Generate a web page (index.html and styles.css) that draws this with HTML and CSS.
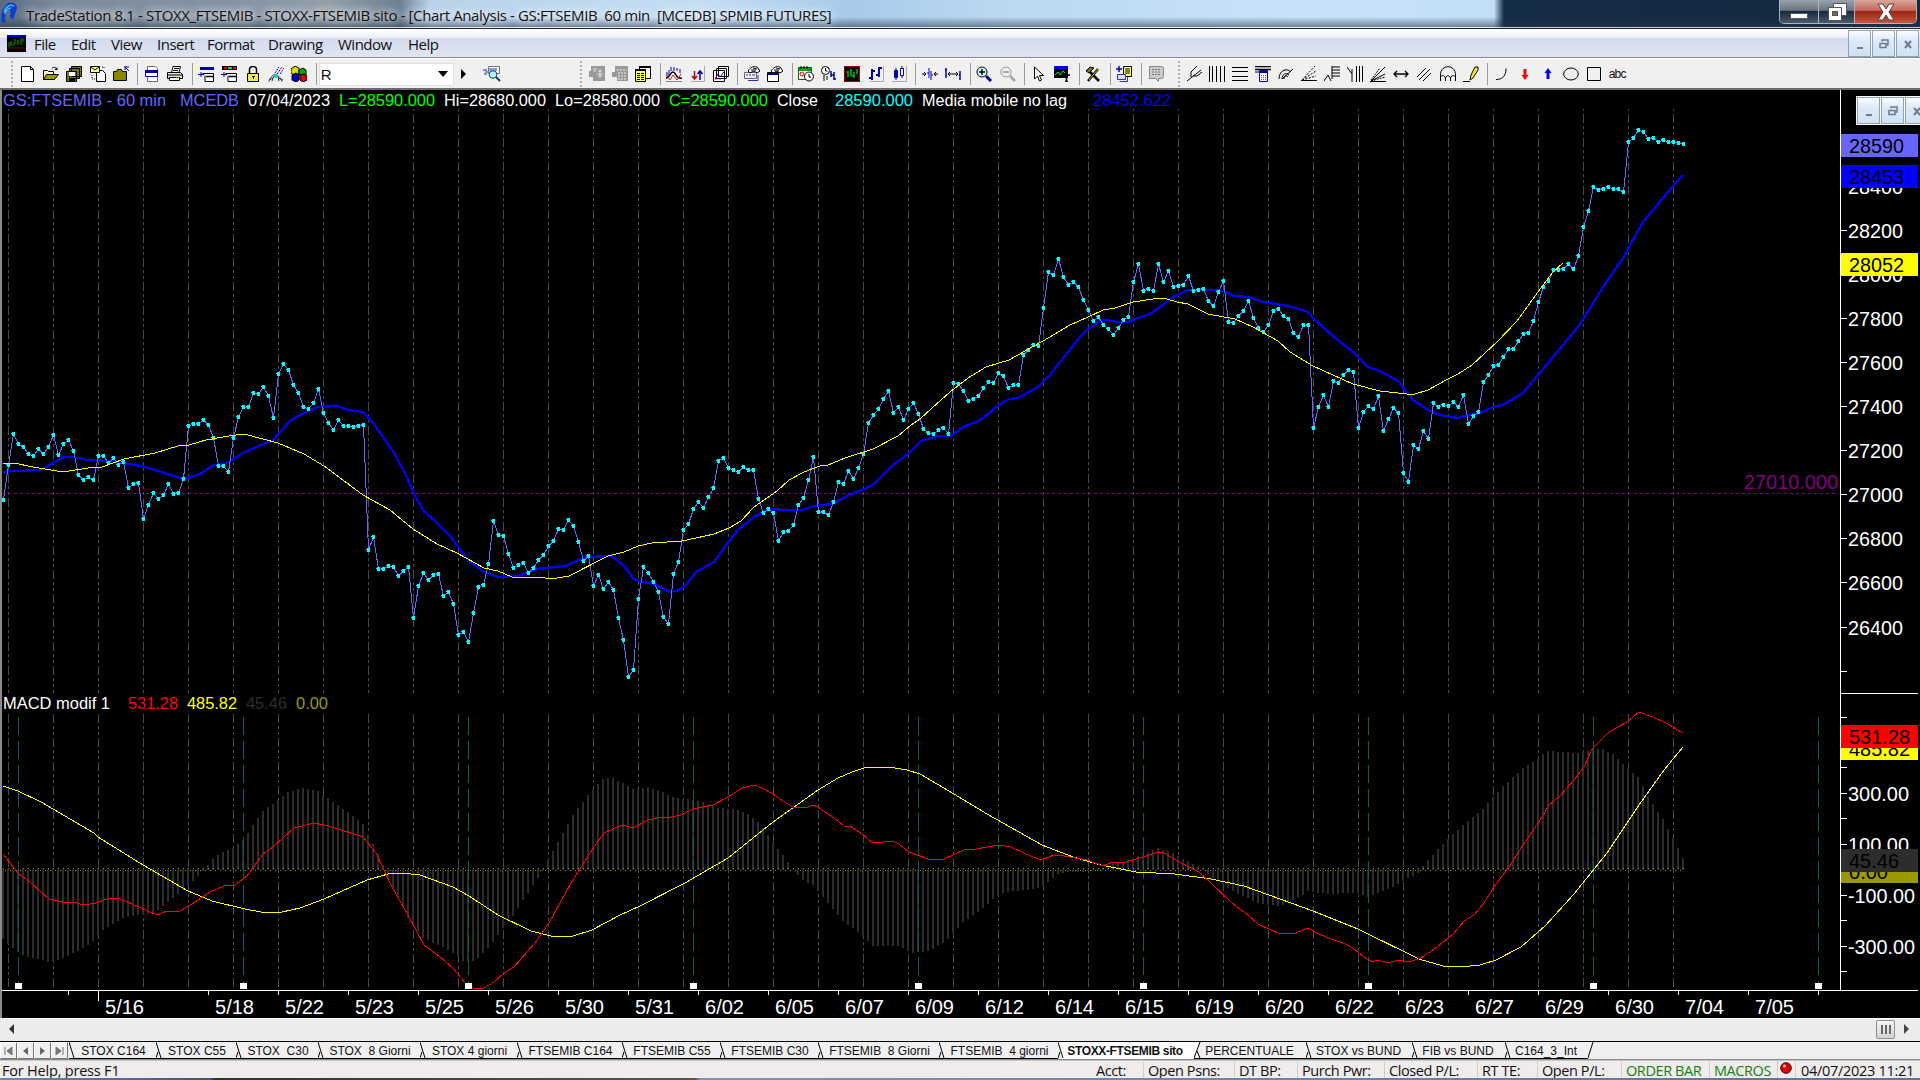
FILE: index.html
```html
<!DOCTYPE html>
<html lang="it">
<head>
    <meta charset="utf-8">
    <title>TradeStation 8.1</title>
    <link rel="stylesheet" href="styles.css">
</head>
<body>
<div class="window">
    <!-- Title bar -->
    <div class="titlebar">
        <svg class="logo" width="18" height="24" viewBox="0 0 18 24"><path d="M2 21C0 14 2 6 7 2c4-3 9-1 10 3 0 4-3 7-3 12l-4-1c0-5 1-8-1-9-3 1-4 8-4 14z" fill="#0a3fd0"/><path d="M4 10C6 4 10 2 14 4M5 12c1-4 3-6 6-6" stroke="#4db4ff" stroke-width="1.5" fill="none"/></svg>
        <span class="title">TradeStation 8.1 - STOXX_FTSEMIB - STOXX-FTSEMIB sito - [Chart Analysis - GS:FTSEMIB  60 min  [MCEDB] SPMIB FUTURES]</span>
        <div class="winbtns">
            <div class="wb min"><svg width="18" height="16"><rect x="0.5" y="9.5" width="17" height="5" rx="1" fill="#fff" stroke="#555"/></svg></div>
            <div class="wb max"><svg width="20" height="18"><path d="M6.500.5h13v12h-13z" fill="#fff" stroke="#555"/><path d="M1.500 4.500h13v13h-13z" fill="#fff" stroke="#555"/><rect x="5.500" y="8.500" width="5" height="4" fill="#667" stroke="#555"/></svg></div>
            <div class="wb close"><svg width="20" height="18"><path d="M2 1h5l3 5 3-5h5l-5 8 5 8h-5l-3-5-3 5H2l5-8z" fill="#fff" stroke="#5a3a3a"/></svg></div>
        </div>
    </div>

    <!-- Menu -->
    <div class="menubar">
        <svg class="appicon" width="19" height="17" viewBox="0 0 19 17"><rect width="19" height="17"/><rect width="19" height="2" fill="#00c"/><path d="M2 12V7m2 4V6m2 5 2-3m0 0V4m3 6V5m3 5V3m2 4V3" stroke="#0a0" fill="none"/><path d="M1 13h17" stroke="#800"/></svg>
        <span class="m1">File</span><span class="m2">Edit</span><span class="m3">View</span><span class="m4">Insert</span><span class="m5">Format</span><span class="m6">Drawing</span><span class="m7">Window</span><span class="m8">Help</span>
        <div class="mdi">
            <div><svg width="22" height="26"><path d="M8 17h6" stroke="#6d7b8a" stroke-width="2"/></svg></div>
            <div><svg width="22" height="26"><path d="M9 10.500V9h6v5h-2M7 12.500h6v4H7z" stroke="#6d7b8a" stroke-width="1.500" fill="none"/></svg></div>
            <div><svg width="22" height="26"><path d="M8 10l6 7m0-7l-6 7" stroke="#6d7b8a" stroke-width="2"/></svg></div>
        </div>
    </div>

    <!-- Toolbar -->
    <div class="toolbar">
        <div class="group g1">
            <i class="grip"></i>
            <svg class="ic" viewBox="0 0 16 16"><path d="M1.500.5h9l3 3v12h-12zM10.500.5v3h3" fill="#fff" stroke="#000"/></svg>
            <svg class="ic" viewBox="0 0 16 16"><path d="M.5 13.500v-9h4l1 1h5v3" fill="#ffc" stroke="#000"/><path d="M.5 13.500l3-5h12l-4 5z" fill="#990" stroke="#000"/><path d="M9 2.500c2-2 4-1 5 1m0-2v2h-2" stroke="#000" fill="none"/></svg>
            <svg class="ic" viewBox="0 0 16 16"><path d="M5.500.5h10v10h-10zM3.500 2.500h10v10h-10zM.5 5.500h10v10H.5z" fill="#770" stroke="#000"/><path d="M3 6h6v4H3z" fill="#fff"/><path d="M3 12h6v3H3z"/></svg>
            <svg class="ic" viewBox="0 0 16 16"><path d="M6.500 4.500h6l3 3v8h-9z" fill="#fff" stroke="#000"/><path d="M.5.500h9v6h-9z" fill="#ff9" stroke="#000"/><path d="M1 1l4 3 4-3" stroke="#000" fill="none"/><path d="M2 9v4h3M12 1h2v2" stroke="#000" stroke-dasharray="1 1" fill="none"/></svg>
            <svg class="ic" viewBox="0 0 16 16"><path d="M.5 14.500v-9h3l1-2h4l1 2h4v9z" fill="#880" stroke="#000"/><path d="M12 1h4M12 0v4M12 1l4 4" stroke="#00a" fill="none"/></svg>
            <i class="sep"></i>
            <svg class="ic" viewBox="0 0 16 16"><path d="M3.500.5h8l2 2v13h-10z" fill="#fff" stroke="#667"/><path d="M1.500 4.500h12v6h-12z" fill="#fff" stroke="#008"/><path d="M1 4h13v3H1z" fill="#00a"/></svg>
            <svg class="ic" viewBox="0 0 16 16"><path d="M4.500 6.500l1.500-6h7.500l-1.500 6" fill="#fff" stroke="#000"/><path d="M.5 6.500h13l2 2v4H.5z" fill="#ddd" stroke="#000"/><path d="M2.500 11.500h10v3h-10z" fill="#fff" stroke="#000"/><path d="M7 2.500h5M6 4.500h5M1 9h14" stroke="#000"/><path d="M9 12h3" stroke="#dd0"/></svg>
            <i class="sep"></i>
            <svg class="ic" viewBox="0 0 16 16"><path d="M2 1h14v3H2z" fill="#00a"/><path d="M4.500 7.500h11v8H7v-6" fill="#fff" stroke="#000"/><path d="M0 8.500h6M3 6v5" stroke="#00a"/><path d="M8 10.500h7" stroke="#000" stroke-width="1.500"/></svg>
            <svg class="ic" viewBox="0 0 16 16"><path d="M1 0h15v4H1z"/><path d="M3 1h3v2H3zM12 1h3v2h-3z" fill="#e00"/><path d="M7 1h4v2H7z" fill="#0d0"/><path d="M4.500 7.500h11v8H7v-6" fill="#fff" stroke="#000"/><path d="M0 8.500h6M3 6v5" stroke="#00a"/><path d="M8 10.500h7" stroke="#000" stroke-width="1.500"/></svg>
            <svg class="ic" viewBox="0 0 16 16"><path d="M4.500 7V3.500c0-4 7-4 7 0V7" stroke="#000" stroke-width="1.500" fill="none"/><path d="M2.500 7.500h11v8h-11z" fill="#ee4" stroke="#000"/><path d="M7 10h3v1H9v2H8v-2H7z"/></svg>
            <svg class="ic" viewBox="0 0 16 16"><path d="M7 7l4-6m-2 7 5-7m-2 7 4-6" stroke="#00a" stroke-dasharray="2 1"/><path d="M1 15.500c1-4 4-7 6-7s6 3 7 7M4 15l2-5m4 0 1 5M1 14l4-2m5 0 5 2" stroke="#333" fill="none"/><circle cx="8" cy="10" r="2" fill="#0cc"/></svg>
            <svg class="ic" viewBox="0 0 16 16"><path d="M0 3l4-3 4 2v6l-4 2-4-3z" fill="#dd0" stroke="#000"/><path d="M8 4l4-2 3 2v5l-4 1-3-2z" fill="#0a0" stroke="#000"/><path d="M1 9l4-2 3 2v5l-3 2-4-2z" fill="#00c" stroke="#000"/><path d="M9 9l4-1 3 2v4l-4 2-3-2z" fill="#d00" stroke="#000"/></svg>
            <i class="sep"></i>
            <div class="combo"><span>R</span><svg width="10" height="6"><path d="M0 0h10L5 6z"/></svg></div>
            <svg class="go" width="6" height="10"><path d="M0 0v10l5-5z"/></svg>
            <svg class="find" width="18" height="16" viewBox="0 0 18 16"><path d="M5.500.5h11v7h-11z" fill="#fff" stroke="#777"/><path d="M7 2v3m2-3v3m2-3v3m2-3v3M0 4h4M2 6h3M1 8h3" stroke="#23a"/><circle cx="10" cy="8.500" r="3.800" fill="#aff" stroke="#236"/><path d="M13 11l4 4" stroke="#236" stroke-width="2"/></svg>
        </div>
        <div class="group g2">
            <i class="grip"></i>
            <svg class="ic" viewBox="0 0 16 16"><path d="M2 0h14v15H4v-4H0V5h2z" fill="#999"/><path d="M4 3h4M4 5h3m1 3h6M11 3v9m-2-7h4m-4 5h4" stroke="#ddd"/></svg>
            <svg class="ic" viewBox="0 0 16 16"><path d="M3 0h13v15H5v-4H0V6h3z" fill="#999"/><path d="M5 4h10M6 7h9M6 10h9M6 13h9" stroke="#eee" stroke-dasharray="2 1"/></svg>
            <svg class="ic" viewBox="0 0 16 16"><path d="M4.500.5h11v12h-11z" fill="#fff" stroke="#000"/><path d="M4 0h12v2H4z"/><path d="M.5 3.500h10v12H.5z" fill="#ff6" stroke="#000"/><path d="M0 3h11v2H0z"/><path d="M2 7.500h3m1 0h3m-7 2h3m1 0h3m-7 2h3m1 0h3m-7 2h3m1 0h3" stroke="#000"/></svg>
            <i class="sep"></i>
            <svg class="ic" viewBox="0 0 16 16"><path d="M0 12c4 0 4-6 7-6s3 8 9 6" stroke="#000" stroke-width="1.500" fill="none"/><path d="M1 10V6m2 3V4m2 1V1m3 4V1m3 4V2m3 5V3" stroke="#00b"/><path d="M0 9l4 5 3-5 4 5 4-6" stroke="#c22" fill="none"/><path d="M0 15.500h16" stroke="#888"/></svg>
            <svg class="ic" viewBox="0 0 16 16"><path d="M15.500 0v15.500H2" stroke="#aaa" fill="none"/><path d="M5.500 5v8M3 10l2.500 3L8 10" stroke="#b00" stroke-width="1.500" fill="none"/><path d="M11 14V5M8.500 8 11 5l2.500 3" stroke="#00a" stroke-width="1.500" fill="none"/></svg>
            <svg class="ic" viewBox="0 0 16 16"><path d="M5.500.5h10v10h-10zM3.500 2.500h10v10h-10zM.5 4.500h11v11H.5z" fill="#fff" stroke="#000"/><path d="M2 13l3-5 2 3 4-5" stroke="#00c" fill="none"/><path d="M3 14v-3m4 3v-2" stroke="#d00"/></svg>
            <i class="sep"></i>
            <svg class="ic" viewBox="0 0 16 16"><path d="M.5 6.500h12v6H.5z" fill="#eee" stroke="#667"/><path d="M2 9h2m1 0h2m1 0h3M4 14.500h10V9" stroke="#33a" fill="none"/><path d="M4 5c3-4 5-5 9-4l3 4-3 2-3-2-4 2z" fill="#fff" stroke="#000"/><path d="M7 4l5 0M9 2l4 1" stroke="#000"/></svg>
            <svg class="ic" viewBox="0 0 16 16"><path d="M.5 6.500h11v9H.5z" fill="#fff" stroke="#000"/><path d="M1 7h10v2H1z" fill="#00a"/><path d="M4 5c3-4 5-5 9-4l3 4-3 2-3-2-4 2z" fill="#fff" stroke="#000"/><path d="M7 4l5 0M9 2l4 1" stroke="#000"/></svg>
            <i class="sep"></i>
            <svg class="ic" viewBox="0 0 16 16"><path d="M.5 1.500h13v12H.5z" fill="#fff" stroke="#060"/><path d="M1 2h12v3H1z" fill="#0a0"/><path d="M3 0v3m3-3v3m3-3v3" stroke="#000"/><circle cx="4" cy="8" r="2" fill="none" stroke="#d00"/><circle cx="11" cy="10.500" r="4.500" fill="#fff" stroke="#000"/><path d="M11 8v3h2" stroke="#000" fill="none"/></svg>
            <svg class="ic" viewBox="0 0 16 16"><circle cx="4.500" cy="4.500" r="4" fill="#fff" stroke="#000"/><path d="M4.500 2v3h2M3 15V9m3 5v-4" stroke="#000" fill="none"/><path d="M10 11V5m3 9V6m-3 3h3m0 4h2" stroke="#00a" stroke-width="1.500"/></svg>
            <svg class="ic" viewBox="0 0 16 16"><path d="M0 0h16v16H0z"/><path d="M.5.500h15v15H.5z" fill="none" stroke="#a00"/><path d="M4 5v6m3-8v7m3-4v6m3-9v5M2 6h2m3 4h3" stroke="#0e0" stroke-width="1.200"/></svg>
            <svg class="ic" viewBox="0 0 16 16"><path d="M15.500 0v15.500H2" stroke="#aaa" fill="none"/><path d="M4 3v11m-3-2h3m0-7h3M11 1v10M8 9h3m0-7h3" stroke="#00a" stroke-width="2"/></svg>
            <svg class="ic" viewBox="0 0 16 16"><path d="M15.500 0v15.500H1" stroke="#aaa" fill="none"/><path d="M5 2v12m6-14v12" stroke="#00a"/><path d="M3.500 4.500h3v7h-3z" fill="#00a" stroke="#00a"/><path d="M9.500 2.500h3v7h-3z" fill="#fff" stroke="#00a"/></svg>
            <i class="sep"></i>
            <svg class="ic" viewBox="0 0 16 16"><path d="M0 8h4M2 6l2 2-2 2M16 8h-4m2-2-2 2 2 2" stroke="#000" fill="none"/><path d="M7 2v10m-2-5h2m2-2v9m0-5h2" stroke="#00c" fill="none"/></svg>
            <svg class="ic" viewBox="0 0 16 16"><path d="M3 8h10M5 6 3 8l2 2m6-4 2 2-2 2" stroke="#000" fill="none"/><path d="M1 2v10M0 4h1m14 1v9m-1-5h1" stroke="#00c" stroke-width="1.500" fill="none"/></svg>
            <i class="sep"></i>
            <svg class="ic" viewBox="0 0 16 16"><circle cx="6" cy="6" r="5" fill="#cff" stroke="#000"/><path d="M6 3v6M3 6h6" stroke="#000" stroke-width="1.500"/><path d="M10 10l5 5" stroke="#00a" stroke-width="3"/></svg>
            <svg class="ic" viewBox="0 0 16 16"><circle cx="6" cy="6" r="5" fill="#eee" stroke="#999"/><path d="M3 6h6" stroke="#999" stroke-width="1.500"/><path d="M10 10l5 5" stroke="#aaa" stroke-width="3"/></svg>
            <i class="sep"></i>
            <svg class="ic" viewBox="0 0 16 16"><path d="M3.500 1v12l3-3 2 5 2-1-2-4.500h4z" fill="#fff" stroke="#000"/></svg>
            <svg class="ic" viewBox="0 0 16 16"><path d="M0 0h14v12H0z"/><path d="M0 0h14v3H0z" fill="#00e"/><path d="M1 9l3-3 2 3 3-4 2 2" stroke="#0e0" fill="none"/><path d="M9 9h7m-3.500 0v7M11 15.500h3" stroke="#000" stroke-width="1.700"/></svg>
            <i class="sep"></i>
            <svg class="ic" viewBox="0 0 16 16"><path d="M4 5l10 10M13 3 3 15" stroke="#000" stroke-width="2.500"/><path d="M13 3 4 14" stroke="#cb0"/><path d="M1 5l4-4 4 1-5 5z" fill="#770" stroke="#000"/></svg>
            <i class="sep"></i>
            <svg class="ic" viewBox="0 0 16 16"><path d="M7.500.5h8v10h-8z" fill="#ff6" stroke="#000"/><path d="M9 3h5M9 5h5M9 7h5" stroke="#000"/><path d="M0 3h6M3 0v6" stroke="#00c" stroke-width="1.500"/><path d="M1.500 8.500h8v5h-8z" fill="#dde" stroke="#33a"/><path d="M3.500 15.500h8v-5" stroke="#33a" fill="none"/></svg>
            <i class="sep"></i>
            <svg class="ic" viewBox="0 0 16 16"><path d="M1.500.5h12q2 0 2 2v8q0 2-2 2h-3v3l-3-3h-6z" fill="#ccc" stroke="#888"/><path d="M4 3.500h9M4 6h9M4 8.500h9" stroke="#777" stroke-dasharray="2 1"/></svg>
        </div>
        <div class="group g3">
            <i class="grip"></i>
            <svg class="ic" viewBox="0 0 16 16"><path d="M1 15 15 4M5 11V6l6-6M5 6l2-2M7 10h4l5-4" stroke="#000" fill="none"/></svg>
            <svg class="ic" viewBox="0 0 16 16"><path d="M.5 0v16m3-16v16m4-16v16m4-16v16m4-16v16" stroke="#000"/></svg>
            <svg class="ic" viewBox="0 0 16 16"><path d="M0 1.500h16m-16 4h16m-16 5h16m-16 4h16" stroke="#000"/></svg>
            <svg class="ic" viewBox="0 0 16 16"><path d="M0 .5h16M0 3.500h16" stroke="#000" stroke-width="1.500"/><path d="M4.500 4.500h8v11h-8z" fill="#fff" stroke="#00a"/><path d="M5 5h7v2H5z" fill="#00a"/><path d="M6 9.500h5m-5 2h5m-5 2h5" stroke="#c33" stroke-dasharray="1 1"/><path d="M0 6h4" stroke="#000"/></svg>
            <svg class="ic" viewBox="0 0 16 16"><path d="M1 13C1 5 8 1 13 6M4 13c0-5 4-7 7-4M6 13c0-3 2-4 4-2M4 13 15 3" stroke="#000" fill="none"/></svg>
            <svg class="ic" viewBox="0 0 16 16"><path d="M0 14.500h16" stroke="#000"/><path d="M1 14 14 0M1 14 15 5M1 14l14-4" stroke="#000" stroke-dasharray="2 1.500"/></svg>
            <svg class="ic" viewBox="0 0 16 16"><path d="M0 15l4-6 3 6M8 0v13M8 1h8M8 4h8M8 7h8M8 10h8" stroke="#000" fill="none"/></svg>
            <svg class="ic" viewBox="0 0 16 16"><path d="M0 1l5 7m0-5v13M9.500 0v16m3-16v16m3-16v16" stroke="#000" fill="none"/></svg>
            <svg class="ic" viewBox="0 0 16 16"><path d="M0 15.500h16M1 15 15 1M1 15l14-7" stroke="#000"/><path d="M1 15l14-4M1 14 10 2" stroke="#000" stroke-dasharray="2 1"/></svg>
            <svg class="ic" viewBox="0 0 16 16"><path d="M1 8h14M4 5 1 8l3 3m8-6 3 3-3 3" stroke="#000" stroke-width="1.300" fill="none"/></svg>
            <svg class="ic" viewBox="0 0 16 16"><path d="M1 11 10 2M3 14 14 3M7 15l8-8" stroke="#000"/></svg>
            <svg class="ic" viewBox="0 0 16 16"><path d="M.5 15V9c0-11 15-11 15 0v6M.5 11c3-3 4-1 5 1 1-3 4-3 5 0 1-3 3-3 5-1M5.500 12v3m5-3v3" stroke="#000" fill="none"/></svg>
            <svg class="ic" viewBox="0 0 16 16"><path d="M0 15.500h7" stroke="#000"/><path d="M7 14l1-5 4-8h3v3l-5 8z" fill="#ee2" stroke="#000"/></svg>
            <i class="sep"></i>
            <svg class="ic" viewBox="0 0 16 16"><path d="M2 13.500c7 0 10-4 10-11" stroke="#000" fill="none"/></svg>
            <svg class="ic" viewBox="0 0 16 16"><path d="M6.500 3h3v6h2L8 14 4.500 9h2z" fill="red"/></svg>
            <svg class="ic" viewBox="0 0 16 16"><path d="M6.500 13h3V7h2L8 2 4.500 7h2z" fill="#00f"/></svg>
            <svg class="ic" viewBox="0 0 16 16"><ellipse cx="8" cy="8" rx="7.300" ry="6" fill="none" stroke="#000"/></svg>
            <svg class="ic" viewBox="0 0 16 16"><path d="M1.500 1.500h13v13h-13z" fill="none" stroke="#000"/></svg>
            <span class="abc">abc</span>
        </div>
    </div>

    <!-- Chart: everything inside is drawn by chart.js -->
    <div class="chart">
        <svg id="plot" width="1918" height="928" viewBox="2 90 1918 928"></svg>
        <div class="mdi floating">
            <div><svg width="22" height="26"><path d="M8 17h6" stroke="#6d7b8a" stroke-width="2"/></svg></div>
            <div><svg width="22" height="26"><path d="M9 10.500V9h6v5h-2M7 12.500h6v4H7z" stroke="#6d7b8a" stroke-width="1.500" fill="none"/></svg></div>
            <div><svg width="22" height="26"><path d="M8 10l6 7m0-7l-6 7" stroke="#6d7b8a" stroke-width="2"/></svg></div>
        </div>
    </div>

    <div class="scrollbar">
        <svg width="6" height="10"><path d="M5 0v10L0 5z" fill="#333"/></svg>
        <div class="thumb"><i></i><i></i><i></i></div>
        <svg width="6" height="10"><path d="M0 0v10l5-5z" fill="#444"/></svg>
    </div>

    <div class="tabrow">
        <div class="nav"><svg width="9" height="8"><path d="M1 0v8M8 0v8L3 4z" stroke="#777" fill="#777"/></svg></div>
        <div class="nav"><svg width="9" height="8"><path d="M7 0v8L2 4z" fill="#666"/></svg></div>
        <div class="nav"><svg width="9" height="8"><path d="M2 0v8l5-4z" fill="#666"/></svg></div>
        <div class="nav"><svg width="9" height="8"><path d="M8 0v8M1 0v8l5-4z" stroke="#777" fill="#777"/></svg></div>
        <div id="tabs"></div>
    </div>

    <div class="status">
        <span class="help">For Help, press F1</span>
        <span class="s1">Acct:</span><span class="s2">Open Psns:</span><span class="s3">DT BP:</span><span class="s4">Purch Pwr:</span><span class="s5">Closed P/L:</span><span class="s6">RT TE:</span><span class="s7">Open P/L:</span><span class="s8 green">ORDER BAR</span><span class="s9 green">MACROS</span><span class="s10"><svg width="12" height="12"><circle cx="6" cy="6" r="5.300" fill="#d00" stroke="#400"/><circle cx="4.500" cy="4" r="1.600" fill="#fbb"/></svg></span><span class="s11">04/07/2023 11:21</span>
    </div>
    <div class="edge"></div>
</div>
<script src="chart.js"></script>
</body>
</html>
```
FILE: styles.css
```css
body {
    margin: 0;
    background: #000;
    overflow: hidden;
    font-family: "Open Sans", "Noto Sans", sans-serif;
    color: #111;
}
.window {
    width: 1920px;
    height: 1080px;
    display: flex;
    flex-direction: column;
    overflow: hidden;
}
svg { display: block; flex: none; }

/* title bar */
.titlebar {
    height: 28px;
    border-bottom: 1px solid #222;
    display: flex;
    align-items: center;
    background:
        linear-gradient(to bottom, rgba(255,255,255,0) 60%, rgba(40,55,75,0.55) 96%, rgba(235,245,255,0.8) 97%),
        linear-gradient(to right, #5a6c80 0, #7d8c9b 60px, #8494a4 240px, #93a0ab 330px, #6d8092 400px, #b9d2ea 430px, #c4def6 700px, #a8cbea 850px, #bcd9f2 1010px, #c8e2fa 1300px, #c3dff8 1494px, #152c46 1504px, #14293f 1920px);
}
.logo { margin-left: 0; width: 18px; }
.title {
    margin-left: 8px;
    margin-top: 2px;
    font-size: 15px;
    letter-spacing: -0.38px;
    white-space: pre;
    text-shadow: 0 0 8px #fff, 0 0 10px rgba(255,255,255,.8);
}
.winbtns {
    margin-left: auto;
    margin-right: 3px;
    align-self: flex-start;
    display: flex;
    width: 138px;
    height: 24px;
    box-sizing: border-box;
    border: 1px solid #a8b4c0;
    border-top: none;
    border-radius: 0 0 5px 5px;
    overflow: hidden;
}
.wb {
    display: flex;
    align-items: center;
    justify-content: center;
    background: linear-gradient(#9aa3ac, #69747f 45%, #1b2a3a 50%, #4a5a6a);
    border-right: 1px solid #a8b4c0;
}
.wb.min { width: 38px; }
.wb.max { width: 35px; }
.wb.close { flex: 1; border-right: none; background: linear-gradient(#dba79c, #c4665a 45%, #9c2414 50%, #c5583c); }

/* menu */
.menubar {
    height: 28px;
    display: flex;
    align-items: center;
    font-size: 15px;
    letter-spacing: -0.5px;
    background: linear-gradient(#fff, #eef0f8 30%, #d5daec 33%, #dfe4f4 90%);
    border-bottom: 1px solid #8c8c8c;
}
.menubar span { padding-top: 2px; box-sizing: border-box; }
.appicon { margin-left: 7px; margin-right: 8px; }
.m1 { width: 37px; }
.m2 { width: 40px; }
.m3 { width: 46px; }
.m4 { width: 50px; }
.m5 { width: 61px; }
.m6 { width: 70px; }
.m7 { width: 70px; }
.mdi { display: flex; gap: 1px; margin-left: auto; margin-right: 1px; background: #fff; }
.mdi div {
    width: 21px;
    height: 25px;
    border: 1px solid #8fa3b8;
    background: linear-gradient(#fafcff, #dceaf8 40%, #cfe2f4);
}
.floating {
    position: absolute;
    left: 1854px;
    top: 6px;
    border: 1px solid #fff;
}

/* toolbar */
.toolbar {
    height: 29px;
    display: flex;
    background: #f0f0f0;
    border-top: 1px solid #fff;
    border-bottom: 2px solid #6d6d6d;
}
.group { display: flex; align-items: center; padding-top: 1px; }
.g1 { width: 580px; margin-left: 11px; margin-right: -11px; }
.g2 { width: 598px; }
.g1 .grip { margin-right: 3.400px; }
.g3 .grip { margin-right: 2px; }
.grip { width: 2px; height: 26px; border-left: 2px dotted #b0b0b0; box-sizing: border-box; margin-right: 3px; }
.ic { width: 16px; height: 16px; margin: 0 3.600px; }
.g3 .ic { margin: 0 3.550px; }
.sep { width: 1px; height: 22px; background: #9a9a9a; margin: 0 2px 0 5px; flex: none; }
.combo {
    width: 135px;
    height: 23px;
    background: #fff;
    border: 1px solid #e0e0e0;
    display: flex;
    align-items: center;
    justify-content: space-between;
    box-sizing: border-box;
    padding: 0 5px 0 1px;
    margin-left: 0;
    font: 15px "Liberation Sans", sans-serif;
}
.go { margin-left: 7px; }
.find { margin-left: 16px; }
.abc { font: 12px "Liberation Sans", sans-serif; letter-spacing: -0.8px; margin-left: 3px; }

/* chart */
.chart {
    position: relative;
    height: 928px;
    border-left: 2px solid #8a8a8a;
    background: #000;
    overflow: hidden;
    flex: none;
}
#plot { shape-rendering: crispEdges; font-family: "Liberation Sans", Arial, sans-serif; }
.line { fill: none; }
.legend { font-size: 16px; }
.scale { font-size: 20px; fill: #fff; }

/* scroll bar */
.scrollbar {
    height: 22px;
    border-top: 1px solid #fff;
    background: #ececec;
    display: flex;
    align-items: center;
    padding: 0 10px 0 9px;
    flex: none;
}
.scrollbar svg { margin-bottom: 2px; }
.thumb {
    margin-left: auto;
    margin-right: 9px;
    margin-bottom: 2px;
    width: 17px;
    height: 17px;
    border: 1px solid #8e8e8e;
    border-radius: 2px;
    background: linear-gradient(#f6f6f6, #d4d4d4);
    display: flex;
    align-items: center;
    justify-content: center;
    gap: 2px;
}
.thumb i { width: 2px; height: 9px; background: #666; }

/* tabs */
.tabrow {
    height: 17px;
    border-top: 1px solid #000;
    border-bottom: 1px solid #888;
    display: flex;
    background: #f0f0f0;
    font: 12px "Liberation Sans", Arial, sans-serif;
    flex: none;
}
.nav {
    width: 17px;
    height: 17px;
    box-sizing: border-box;
    border: 1px solid #fff;
    border-right-color: #777;
    border-bottom-color: #777;
    display: flex;
    align-items: center;
    justify-content: center;
}
#tabs { display: flex; margin-left: 1px; }
.tab {
    display: flex;
    height: 16px;
    border-bottom: 1px solid #000;
    white-space: pre;
    color: #111;
}
.tab span { flex: 1; text-align: center; line-height: 18px; padding-right: 5px; }
.tab.on { background: #fff; border-bottom-color: #fff; font-weight: bold; letter-spacing: -0.35px; }
.tab.on span { padding-right: 9px; }
.tab.on ~ .tab span { padding-right: 8px; }

/* status */
.status {
    height: 17px;
    border-top: 1px solid #c8c8c8;
    background: #f0eceb;
    display: flex;
    font-size: 14.5px;
    line-height: 20px;
    letter-spacing: -0.42px;
    white-space: nowrap;
    flex: none;
}
.status span { box-sizing: border-box; padding-left: 4px; border-right: 1px solid #d2cecc; }
.status .help { width: 1092px; padding-left: 2px; border: none; letter-spacing: -0.2px; }
.s1 { width: 52px; }
.s2 { width: 91px; }
.s3 { width: 63px; }
.s4 { width: 87px; }
.s5 { width: 93px; }
.s6 { width: 60px; }
.s7 { width: 84px; }
.s8 { width: 88px; }
.s9 { width: 68px; }
.s10 { width: 18px; padding-top: 1px; }
.status .s10 { padding-left: 2px; }
.status .s11 { border: none; padding-left: 5px; letter-spacing: -0.3px; }
.green { color: #128012; }
.edge { height: 2px; background: linear-gradient(to right, #6f8cb0 0, #44566e 210px, #333 215px, #555 695px, #7c93b8 700px, #5d7397 1920px); flex: none; }
```
FILE: chart.js
```js
const NS = "http://www.w3.org/2000/svg";
const plot = document.getElementById("plot");

function el(tag, attrs, text) {
    const e = document.createElementNS(NS, tag);
    for (const k in attrs) e.setAttribute(k, attrs[k]);
    if (text) e.textContent = text;
    plot.appendChild(e);
    return e;
}
function rect(x, y, w, h, fill) { el("rect", {x, y, width: w, height: h, fill}); }
function vline(x, y1, y2, stroke, dash) {
    el("line", {x1: x + 0.5, x2: x + 0.5, y1, y2, stroke, "stroke-dasharray": dash || "none"});
}
function hline(y, x1, x2, stroke, dash) {
    el("line", {y1: y + 0.5, y2: y + 0.5, x1, x2, stroke, "stroke-dasharray": dash || "none"});
}
function curve(pts, stroke, w) {
    el("polyline", {points: pts, class: "line", stroke, "stroke-width": w});
}

// closes, one bar every 5px, in thirds of a pixel below the base
const closes = [
    [340, [480,375,282,312,321,342,348,327,342,321,285,345,312,300,333,405,420,411,420,348,348,370,354,375,366,443,432,429,537,495,459,477,465,432,462,459,417,258,252,252,240,255,294,378,378,396,294,231,201,201,159,162,141,168,234,101,72,90,135,159,201,207,189,147,219,249,270,240,258,258,261,258,255,630,591,687,687,678,681,708,693,681,833,738,699,720,705,702,768,756,792,885,876,906,819,741,735,672,543,585,588,642,684,675,669,699,684,660,645,618,603,567,570,540,558,606,663,648,738,705,747,726,750,833,900,1011,990,
        777,681,699,726,756,831,852,702,666,570,552,507,486,504,471,444,363,354,384,390,396,381,390,390,477,519,507,519,603,576,573,555,495,474,420,351,516,516,525,486,426,432,393,417,384,342,249,225,207,177,153,219,201,240,207,189,222,267,279,282,270,264,282,129,132,153,183,177,168,144,126,129,99,108,144,135,135,45,30,15,18]],
    [240, [204,96,105,57,111,135,126,141,180,210,243,231,255,267,285,264,240,231,126,72,153,147,153,72,126,93,141,138,135,108,153,150,147,183,198,156,123,246,249,228,213,183,234,264,276,255,213,207,228,237,279,291,255,255,564,501,465,501,423,429,405,390,396]],
    [100, [984,936,918,927,888,993,957,924,939,1119,1146,1035,1047,993,1017,909,921,915,918,906,921,885,972,948,936,846,825,798,795,771,747,747,723,702,699,663,606,561,543,510,510,507,492,507,468,381,333,261,270,267,261,267,267,276,126,114,90,96,117,114,126,120,126,126,129,132]]
];
const price = [];
for (const [base, list] of closes)
    for (const v of list) price.push([3 + 5 * price.length, base + Math.round(v / 3)]);

const slowMa = "3,472 13,471 41,470 53,463 64,457 74,457 88,460 110,461 141,466 152,469 167,474 184,479 200,474 212,466 229,462 243,453 261,445 273,440 282,430 290,421 300,415 318,407 337,406 348,410 363,412 374,424 394,453 406,475 414,494 423,510 439,525 451,537 468,560 484,572 498,577 518,576 537,569 565,566 586,557 612,556 624,566 633,578 638,581 654,584 670,592 679,590 686,585 696,572 714,562 729,541 739,529 754,517 768,510 777,509 779,510 802,510 814,506 832,504 845,497 864,489 873,485 893,465 908,454 921,441 939,436 951,436 963,427 979,421 998,406 1009,399 1018,398 1038,387 1050,375 1060,362 1080,337 1088,329 1100,321 1107,320 1117,322 1128,322 1138,318 1150,314 1160,307 1173,297 1188,290 1213,290 1223,291 1235,296 1248,297 1263,302 1277,304 1292,307 1308,312 1313,318 1333,336 1353,352 1368,367 1380,371 1398,381 1413,400 1428,410 1440,415 1458,418 1468,415 1480,413 1493,407 1503,405 1523,393 1528,387 1538,375 1548,363 1578,327 1583,319 1597,297 1603,287 1623,258 1633,240 1643,222 1653,210 1673,186 1683,175";
const centredMa = "3,463 14,463 33,467 63,472 94,467 102,467 124,459 155,453 178,446 189,445 206,440 229,436 244,434 263,439 278,443 304,454 324,466 347,483 363,495 390,510 413,529 437,544 457,553 484,568 498,571 512,577 527,578 539,577 551,579 569,576 608,556 624,552 638,546 652,543 682,541 696,538 714,534 729,528 741,521 754,507 777,491 789,480 804,472 820,466 828,465 845,458 873,449 898,436 911,425 920,419 932,408 950,392 968,378 986,367 1009,360 1025,351 1043,341 1070,325 1088,317 1103,310 1115,308 1133,302 1160,298 1167,299 1177,302 1188,304 1208,314 1235,319 1253,327 1278,341 1290,352 1313,366 1333,375 1353,384 1380,391 1407,394 1415,394 1428,390 1448,379 1458,374 1472,365 1498,341 1517,321 1538,292 1553,272 1563,263";
const macd = "3,854 18,873 31,883 49,899 63,902 73,902 84,905 96,903 110,898 120,899 139,907 157,915 167,911 180,911 192,904 210,892 224,886 235,885 247,876 263,854 273,847 294,828 314,823 324,825 335,828 363,837 376,853 392,887 408,915 424,945 439,956 453,968 465,983 473,988 484,988 494,982 504,973 514,967 535,943 549,923 571,883 592,850 604,833 622,825 633,828 648,820 662,817 671,817 681,815 693,809 713,805 728,797 742,788 754,785 762,788 773,794 783,801 793,807 805,808 813,805 818,807 838,821 844,826 850,826 862,834 873,843 893,841 899,844 909,852 928,859 944,859 964,850 977,849 998,845 1011,847 1024,853 1038,859 1044,859 1054,855 1064,856 1087,860 1103,866 1113,862 1126,862 1146,856 1158,852 1164,853 1179,862 1199,872 1211,883 1232,903 1248,915 1258,924 1269,929 1280,934 1296,933 1308,928 1319,934 1331,939 1343,943 1353,948 1364,957 1372,962 1378,960 1388,963 1398,960 1409,962 1421,958 1437,947 1453,934 1464,921 1474,915 1484,903 1494,887 1509,867 1523,845 1539,822 1549,805 1560,796 1574,780 1584,767 1592,749 1609,732 1627,722 1639,712 1653,717 1666,723 1683,733";
const signal = "3,786 18,791 41,802 94,833 98,837 143,865 188,891 212,901 245,909 261,912 282,912 300,908 324,899 367,880 388,874 402,873 420,875 453,887 469,896 498,915 531,931 551,936 573,936 592,930 620,915 640,906 685,883 728,858 773,822 818,790 838,778 852,772 864,768 881,767 895,768 907,770 920,774 954,794 987,814 1042,845 1073,857 1101,865 1136,872 1175,874 1211,879 1244,886 1280,899 1313,911 1358,929 1419,959 1443,966 1460,967 1480,965 1496,960 1521,947 1545,926 1574,894 1607,853 1639,805 1664,770 1683,747";
const histogram = "3,938 13,947 22,954 37,958 50,961 63,957 82,948 92,941 102,930 122,917 153,912 163,905 173,897 188,885 198,875 204,869 212,860 222,852 233,848 244,839 253,825 263,811 278,800 288,792 302,788 318,791 329,799 349,813 363,824 373,844 384,867 388,877 398,897 408,917 423,937 443,946 453,952 465,962 475,960 490,945 503,927 513,915 531,887 543,870 548,860 563,833 573,815 588,795 603,779 612,778 624,783 633,789 643,788 648,787 658,790 673,797 685,799 699,801 718,808 734,809 748,814 758,822 769,836 779,850 793,869 803,879 813,884 828,902 844,921 856,929 873,945 899,945 911,952 930,950 946,940 962,922 983,907 999,893 1011,890 1028,889 1040,887 1048,881 1058,873 1069,871 1097,870 1109,865 1130,860 1144,853 1158,848 1171,852 1189,862 1203,868 1213,877 1232,890 1260,903 1280,905 1298,897 1308,890 1327,893 1358,892 1368,896 1386,889 1402,881 1419,871 1428,860 1443,844 1464,824 1483,809 1502,787 1523,768 1533,762 1547,751 1580,753 1592,748 1602,749 1613,754 1627,768 1639,778 1649,798 1664,821 1673,838 1683,858"
    .split(" ").map(p => p.split(",").map(Number));

function at(pts, x) {
    for (let i = 1; i < pts.length; i++) {
        const [x0, y0] = pts[i - 1], [x1, y1] = pts[i];
        if (x <= x1) return Math.round(y0 + (y1 - y0) * (x - x0) / (x1 - x0));
    }
    return pts[pts.length - 1][1];
}

// session breaks
for (let x = 8; x <= 1673; x += 45) {
    vline(x, 109, 111, "#4a4a4a");
    vline(x, 114, 693, "#4a4a4a", "9 3 3 3 3 3");
    vline(x, 714, 987, "#4a4a4a", "9 3 3 3 3 3");
}

// histogram
for (let x = 3; x <= 1683; x += 5) {
    const y = at(histogram, x);
    rect(x - 1, Math.min(y, 869), 2, Math.abs(y - 869) + 1, "#2d2d2d");
}
hline(868, 3, 1685, "#999900", "1 4");
hline(870, 5, 1685, "#999900", "1 4");

// cycle lines
for (let x = 18; x <= 1818; x += 225) vline(x, 717, 983, "#006464", "18 6");

hline(493, 2, 1837, "#800080", "3 3");
curve(slowMa, "#0000ff", 2.3);
curve(price.map(p => (p[0] + 0.5) + "," + p[1]).join(" "), "#6666ff", 1);
for (const [x, y] of price) {
    rect(x - 1, y - 2, 3, 4, "#00ffff");
    rect(x - 2, y - 1, 1, 1, "#00ffff");
}
curve(centredMa, "#ffff00", 1);
curve(signal, "#ffff00", 1);
curve(macd, "#ff0000", 1);
for (let x = 18; x <= 1818; x += 225) rect(x - 3, 983, 7, 6, "#fff");

// axes
vline(1840, 90, 990, "#fff");
hline(990, 2, 1918, "#fff");
hline(693, 1840, 1918, "#fff");

function label(x, y, s, fill, w) {
    el("text", {x, y, class: "scale", style: "fill:" + fill, textLength: w, lengthAdjust: "spacingAndGlyphs"}, s);
}
for (let i = 0; i <= 11; i++) {
    const y = Math.floor(186 + i * 44.1), v = 28400 - i * 200;
    hline(y, 1841, 1847, "#fff");
    if (v > 26200) label(1848, y + 8, String(v), "#fff", 55);
}
for (const y of [717, 767, 793, 818, 844, 870, 895, 920, 946, 971]) hline(y, 1841, 1847, "#fff");
label(1848, 801, "300.00", "#fff", 61);
label(1848, 852, "100.00", "#fff", 61);
label(1848, 903, "-100.00", "#fff", 67);
label(1848, 954, "-300.00", "#fff", 67);

function tag(y, h, s, bg, base, w) {
    rect(1841, y, 77, h, bg);
    label(1849, base, s, "#000", w);
}
tag(134, 23, "28590", "#6666ff", 153, 55);
tag(165, 23, "28453", "#0000ff", 184, 55);
tag(253, 23, "28052", "#ffff00", 272, 55);
tag(737, 23, "485.82", "#ffff00", 756, 61);
tag(725, 23, "531.28", "#ff0000", 744, 61);
tag(860, 23, "0.00", "#999900", 879, 39);
tag(849, 23, "45.46", "#2d2d2d", 868, 50);
label(1744, 489, "27010.000", "#800080", 94);

vline(68, 991, 995, "#fff");
vline(98, 991, 1001, "#fff");
for (let x = 208; x <= 1818; x += 70) vline(x, 991, 995, "#fff");
label(105, 1014, "5/16", "#fff", 39);
["5/18","5/22","5/23","5/25","5/26","5/30","5/31","6/02","6/05","6/07","6/09","6/12","6/14","6/15","6/19","6/20","6/22","6/23","6/27","6/29","6/30","7/04","7/05"]
    .forEach((d, i) => label(215 + 70 * i, 1014, d, "#fff", 39));

// legends: x, width, colour, text
function legend(y, items) {
    for (const [x, w, fill, s] of items)
        el("text", {x, y, fill, class: "legend", textLength: w, lengthAdjust: "spacingAndGlyphs"}, s);
}
legend(106, [
    [3, 163, "#6666ff", "GS:FTSEMIB - 60 min"], [180, 59, "#6666ff", "MCEDB"], [248, 82, "#fff", "07/04/2023"],
    [339, 96, "#0f0", "L=28590.000"], [444, 102, "#fff", "Hi=28680.000"], [555, 105, "#fff", "Lo=28580.000"],
    [669, 99, "#0f0", "C=28590.000"], [777, 41, "#fff", "Close"], [835, 78, "#0ff", "28590.000"],
    [922, 145, "#fff", "Media mobile no lag"], [1093, 78, "#00f", "28452.622"]
]);
legend(709, [
    [3, 107, "#fff", "MACD modif 1"], [128, 50, "#f00", "531.28"], [187, 50, "#ff0", "485.82"],
    [246, 41, "#2d2d2d", "45.46"], [296, 32, "#990", "0.00"]
]);

// workspace tabs: name and left edge
const tabs = [["STOX C164", 69], ["STOX C55", 156], ["STOX  C30", 236], ["STOX  8 Giorni", 318], ["STOX 4 giorni", 420],
    ["FTSEMIB C164", 517], ["FTSEMIB C55", 622], ["FTSEMIB C30", 720], ["FTSEMIB  8 Giorni", 818], ["FTSEMIB  4 giorni", 939],
    ["STOXX-FTSEMIB sito", 1058], ["PERCENTUALE", 1194], ["STOX vs BUND", 1306], ["FIB vs BUND", 1412], ["C164_3_Int", 1505], ["", 1588]];
const row = document.getElementById("tabs");
tabs.forEach(([name, x], i) => {
    if (!name) return;
    const active = name.startsWith("STOXX"), afterActive = i == 11;
    const slash = afterActive ? "M6 0 0 16" : "M0 0 5 16";
    const small = afterActive ? "M3 9l3 7" : (i ? "M2 10 0 16" : "");
    const fill = active ? "M0 0h7v16H5z" : (afterActive ? "M0 0h6L0 16z" : "");
    const t = document.createElement("div");
    t.className = active ? "tab on" : "tab";
    t.style.width = (tabs[i + 1][1] - x) + "px";
    t.innerHTML = `<svg width="7" height="16"><path d="M0 0h7v16H0z" fill="#f0f0f0"/><path d="${fill}" fill="#fff"/><path d="${slash}${small}" stroke="#000" fill="none"/></svg><span>${name}</span>`;
    row.appendChild(t);
});
const end = document.createElement("div");
end.innerHTML = '<svg width="7" height="17"><path d="M5 0 0 16" stroke="#000"/></svg>';
row.appendChild(end);
```
